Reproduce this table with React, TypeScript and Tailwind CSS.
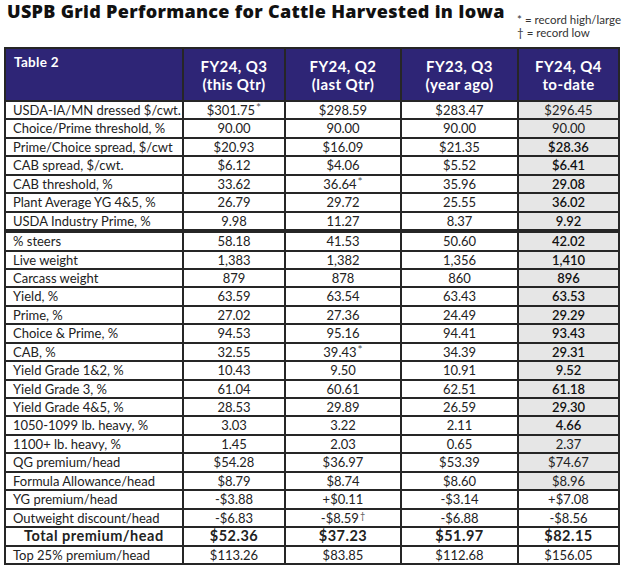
import React from "react";

type Row = { label: string; v: React.ReactNode[]; grey?: boolean; semi?: boolean; bold?: boolean; sepTop?: boolean };

const Star = () => <span className="text-[12px] text-[#555] relative top-[-3px] leading-none ml-[1px]">*</span>;
const Dag = () => <span className="text-[9px] text-[#555] relative top-[-4px] leading-none ml-[1px]">†</span>;

const rows: Row[] = [
  { label: "USDA-IA/MN dressed $/cwt.", v: [<>$301.75<Star /></>, "$298.59", "$283.47", "$296.45"], grey: true },
  { label: "Choice/Prime threshold, %", v: ["90.00", "90.00", "90.00", "90.00"], grey: true },
  { label: "Prime/Choice spread, $/cwt", v: ["$20.93", "$16.09", "$21.35", "$28.36"], grey: true, semi: true },
  { label: "CAB spread, $/cwt.", v: ["$6.12", "$4.06", "$5.52", "$6.41"], grey: true, semi: true },
  { label: "CAB threshold, %", v: ["33.62", <>36.64<Star /></>, "35.96", "29.08"], grey: true, semi: true },
  { label: "Plant Average YG 4&5, %", v: ["26.79", "29.72", "25.55", "36.02"], grey: true, semi: true },
  { label: "USDA Industry Prime, %", v: ["9.98", "11.27", "8.37", "9.92"], grey: true, semi: true },
  { label: "% steers", v: ["58.18", "41.53", "50.60", "42.02"], grey: true, semi: true, sepTop: true },
  { label: "Live weight", v: ["1,383", "1,382", "1,356", "1,410"], grey: true, semi: true },
  { label: "Carcass weight", v: ["879", "878", "860", "896"], grey: true, semi: true },
  { label: "Yield, %", v: ["63.59", "63.54", "63.43", "63.53"], grey: true, semi: true },
  { label: "Prime, %", v: ["27.02", "27.36", "24.49", "29.29"], grey: true, semi: true },
  { label: "Choice & Prime, %", v: ["94.53", "95.16", "94.41", "93.43"], grey: true, semi: true },
  { label: "CAB, %", v: ["32.55", <>39.43<Star /></>, "34.39", "29.31"], grey: true, semi: true },
  { label: "Yield Grade 1&2, %", v: ["10.43", "9.50", "10.91", "9.52"], grey: true, semi: true },
  { label: "Yield Grade 3, %", v: ["61.04", "60.61", "62.51", "61.18"], grey: true, semi: true },
  { label: "Yield Grade 4&5, %", v: ["28.53", "29.89", "26.59", "29.30"], grey: true, semi: true },
  { label: "1050-1099 lb. heavy, %", v: ["3.03", "3.22", "2.11", "4.66"], grey: true, semi: true },
  { label: "1100+ lb. heavy, %", v: ["1.45", "2.03", "0.65", "2.37"], grey: true },
  { label: "QG premium/head", v: ["$54.28", "$36.97", "$53.39", "$74.67"], grey: true },
  { label: "Formula Allowance/head", v: ["$8.79", "$8.74", "$8.60", "$8.96"], grey: true },
  { label: "YG premium/head", v: ["-$3.88", "+$0.11", "-$3.14", "+$7.08"] },
  { label: "Outweight discount/head", v: ["-$6.83", <>-$8.59<Dag /></>, "-$6.88", "-$8.56"] },
  { label: "Total premium/head", v: ["$52.36", "$37.23", "$51.97", "$82.15"], bold: true },
  { label: "Top 25% premium/head", v: ["$113.26", "$83.85", "$112.68", "$156.05"] },
];

const cols = "grid grid-cols-[176px_100px_114px_115px_99px] gap-x-[2px]";

export default function App() {
  return (
    <div className="w-[624px] h-[570px] bg-white font-['Lato','Open_Sans',sans-serif] text-[#222]">
      <div className="h-[47px] flex items-start justify-between pl-[7px] pr-[3px]">
        <div className="font-['Open_Sans',sans-serif] text-[18px] leading-[22px] font-extrabold tracking-[0.3px] text-[#111] whitespace-nowrap">
          USPB Grid Performance for Cattle Harvested in Iowa
        </div>
        <div className="text-[11.5px] leading-[13px] text-[#333] pt-[13px] whitespace-nowrap">
          <div>* = record high/large</div>
          <div>† = record low</div>
        </div>
      </div>
      <div className="ml-[4px] w-[616px] bg-[#262626] p-[2px] flex flex-col gap-y-[2px]">
        <div className={`${cols} h-[51px]`}>
          <div className="bg-[#2e2576] text-white font-bold text-[13.5px] tracking-[0.3px] pl-[8px] pt-[3px]">Table 2</div>
          {[
            ["FY24, Q3", "(this Qtr)"],
            ["FY24, Q2", "(last Qtr)"],
            ["FY23, Q3", "(year ago)"],
            ["FY24, Q4", "to-date"],
          ].map((h, i) => (
            <div key={i} className="bg-[#2e2576] text-white font-bold text-[15px] tracking-[0.4px] leading-[18px] flex flex-col items-center justify-center">
              <div>{h[0]}</div>
              <div>{h[1]}</div>
            </div>
          ))}
        </div>
        {rows.map((r, i) => (
          <div key={i} className={`${cols} h-[16.45px] ${r.sepTop ? "mt-[2px]" : ""} ${r.bold ? "text-[14.5px] font-bold tracking-[0.5px]" : "text-[13px]"} leading-[16px]`}>
            <div className={`bg-white whitespace-nowrap overflow-hidden ${r.bold ? "pl-[18px]" : "pl-[7px]"}`}>{r.label}</div>
            {r.v.map((v, j) => (
              <div
                key={j}
                className={`text-center whitespace-nowrap ${j === 3 && r.grey ? "bg-[#e6e6e6]" : "bg-white"} ${j === 3 && r.semi ? "font-semibold text-[#111]" : ""}`}
              >
                {v}
              </div>
            ))}
          </div>
        ))}
      </div>
    </div>
  );
}
